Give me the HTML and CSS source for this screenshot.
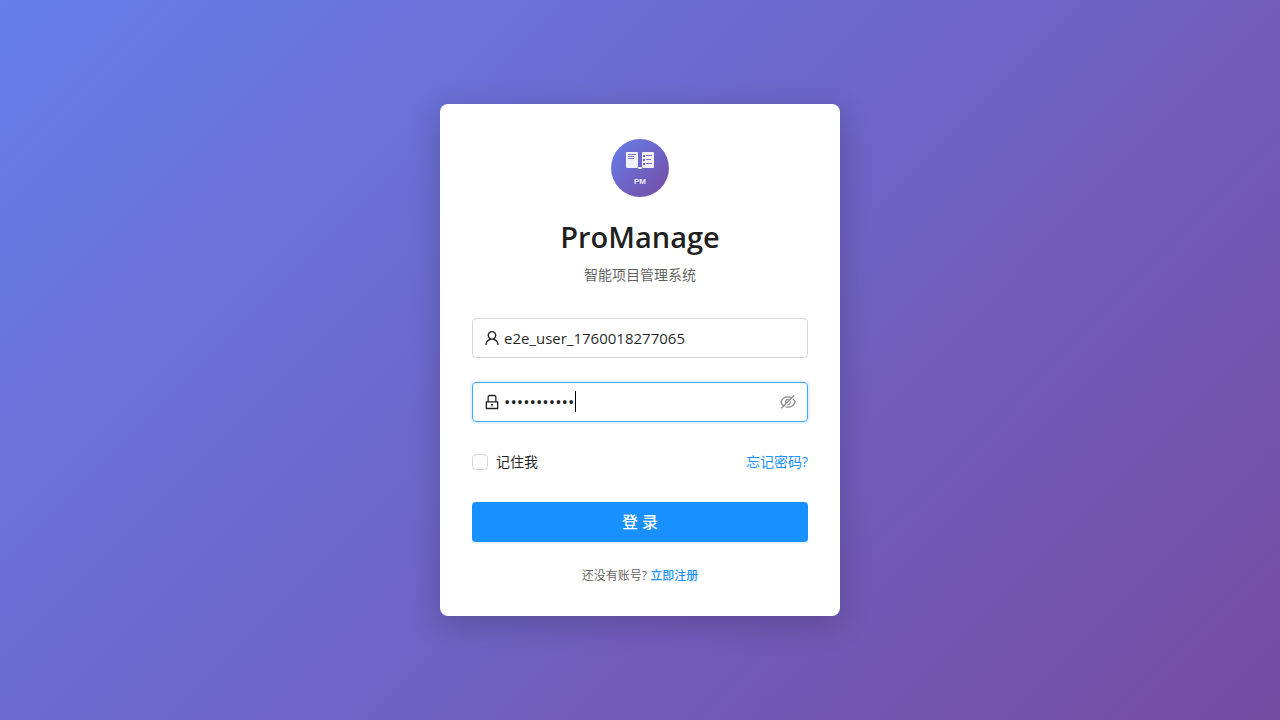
FILE: index.html
```html
<!DOCTYPE html>
<html lang="zh-CN">
<head>
<meta charset="utf-8">
<meta name="viewport" content="width=device-width, initial-scale=1">
<title>ProManage</title>
<link rel="stylesheet" href="styles.css">
</head>
<body>
<main class="login-page">
  <section class="login-card">
    <header class="login-header">
      <svg class="logo" viewBox="0 0 64 64" role="img" aria-label="ProManage">
        <defs>
          <linearGradient id="logo-fill" x1="0" y1="0" x2="1" y2="1">
            <stop offset="0" stop-color="#667eea"/>
            <stop offset="1" stop-color="#764ba2"/>
          </linearGradient>
        </defs>
        <circle cx="32" cy="32" r="29" fill="url(#logo-fill)"/>
        <g fill="#fff" fill-opacity=".9">
          <rect x="18" y="16" width="12" height="16" rx="1"/>
          <rect x="34" y="16" width="12" height="16" rx="1"/>
          <rect x="30" y="31" width="4" height="2" rx="1"/>
        </g>
        <g stroke="#6d67cb" stroke-width=".9">
          <path d="M20 18.5h8M20 20.5h6M20 22.5h6"/>
          <path d="M38 19.5h6M38 23.5h5M38 27.5h6"/>
        </g>
        <g fill="#6d67cb">
          <rect x="35" y="19" width="2" height="2"/>
          <rect x="35" y="23" width="2" height="2"/>
          <rect x="35" y="27" width="2" height="2"/>
        </g>
        <text class="logo-text" x="32" y="48" text-anchor="middle">PM</text>
      </svg>
      <h1 class="title">ProManage</h1>
      <p class="subtitle">智能项目管理系统</p>
    </header>
    <form class="login-form">
      <div class="field">
        <svg class="field-icon" viewBox="64 64 896 896" aria-hidden="true"><path d="M858.5 763.6a374 374 0 00-80.6-119.5 375.63 375.63 0 00-119.5-80.6c-.4-.2-.8-.3-1.2-.5C719.5 518 760 444.7 760 362c0-137-111-248-248-248S264 225 264 362c0 82.7 40.5 156 102.8 201.1-.4.2-.8.3-1.2.5-44.8 18.9-85 46-119.5 80.6a375.63 375.63 0 00-80.6 119.5A371.7 371.7 0 00136 901.8a8 8 0 008 8.2h60c4.4 0 7.9-3.5 8-7.8 2-77.2 33-149.5 87.8-204.3 56.7-56.7 132-87.9 212.2-87.9s155.5 31.2 212.2 87.9C779 752.7 810 825 812 902.2c.1 4.4 3.6 7.8 8 7.8h60a8 8 0 008-8.2c-1-47.8-10.9-94.3-29.5-138.2zM512 534c-45.9 0-89.1-17.9-121.6-50.4S340 407.9 340 362c0-45.9 17.9-89.1 50.4-121.6S466.1 190 512 190s89.1 17.9 121.6 50.4S684 316.1 684 362c0 45.9-17.9 89.1-50.4 121.6S557.9 534 512 534z"/></svg>
        <input class="field-input" type="text" aria-label="用户名" value="e2e_user_1760018277065">
      </div>
      <div class="field field-active">
        <svg class="field-icon" viewBox="64 64 896 896" aria-hidden="true"><path d="M832 464h-68V240c0-70.7-57.3-128-128-128H388c-70.7 0-128 57.3-128 128v224h-68c-17.7 0-32 14.3-32 32v384c0 17.7 14.3 32 32 32h640c17.7 0 32-14.3 32-32V496c0-17.7-14.3-32-32-32zM332 240c0-30.9 25.1-56 56-56h248c30.9 0 56 25.1 56 56v224H332V240zm460 600H232V536h560v304zM484 701v53c0 4.4 3.6 8 8 8h40c4.4 0 8-3.6 8-8v-53a48.01 48.01 0 10-56 0z"/></svg>
        <span class="password-box">
          <input class="field-input password-input" type="password" aria-label="密码" value="Test@123456">
          <span class="caret"></span>
        </span>
        <button class="eye-button" type="button" aria-label="显示密码">
          <svg class="eye-icon" viewBox="64 64 896 896" aria-hidden="true"><path d="M942.2 486.2Q889.47 375.11 816.7 305l-50.88 50.88C807.31 395.53 843.45 447.4 874.7 512 791.5 684.2 673.4 766 512 766q-72.67 0-133.87-22.38L323 798.75Q408 838 512 838q288.3 0 430.2-300.3a60.29 60.29 0 000-51.5zm-63.57-320.64L836 122.88a8 8 0 00-11.32 0L715.31 232.2Q624.86 186 512 186q-288.3 0-430.2 300.3a60.3 60.3 0 000 51.5q56.69 119.4 136.5 191.41L112.48 835a8 8 0 000 11.31L155.17 889a8 8 0 0011.31 0l712.15-712.12a8 8 0 000-11.32zM149.3 512C232.6 339.8 350.7 258 512 258c54.54 0 104.13 9.36 149.12 28.39l-70.3 70.3a176 176 0 00-238.13 238.13l-83.42 83.42C223.1 637.49 183.3 582.28 149.3 512zm246.7 0a112.11 112.11 0 01146.2-106.69L401.31 546.2A112 112 0 01396 512z"/><path d="M508 624c-3.46 0-6.87-.16-10.25-.47l-52.82 52.82a176.09 176.09 0 00227.42-227.42l-52.82 52.82c.31 3.38.47 6.79.47 10.25a111.94 111.94 0 01-112 112z"/></svg>
        </button>
      </div>
      <div class="options">
        <label class="remember"><input class="checkbox" type="checkbox">记住我</label>
        <a class="link" href="#">忘记密码?</a>
      </div>
      <button class="submit" type="submit">登 录</button>
    </form>
    <p class="signup">还没有账号? <a class="link link-strong" href="#">立即注册</a></p>
  </section>
</main>
</body>
</html>
```
FILE: styles.css
```css
* {
  box-sizing: border-box;
}

body {
  margin: 0;
  color: rgba(0, 0, 0, 0.88);
  font-family: "Open Sans", "Noto Sans CJK SC", sans-serif;
  font-size: 14px;
  line-height: 22px;
}

.login-page {
  display: flex;
  align-items: center;
  justify-content: center;
  min-height: 100vh;
  padding: 20px;
  background: linear-gradient(135deg, #667eea 0%, #764ba2 100%);
}

.login-card {
  width: 100%;
  max-width: 400px;
  padding: 32px 32px 30px;
  border-radius: 8px;
  background: #fff;
  box-shadow: 0 8px 32px rgba(0, 0, 0, 0.2);
}

.login-header {
  display: flex;
  flex-direction: column;
  align-items: center;
  margin-bottom: 32px;
}

.logo {
  width: 64px;
  height: 64px;
  margin-bottom: 18px;
}

.logo-text {
  fill: #fff;
  fill-opacity: 0.9;
  font-family: "Liberation Sans", sans-serif;
  font-size: 8px;
  font-weight: 700;
}

.title {
  margin: 0 0 8px;
  font-size: 29px;
  font-weight: 600;
  line-height: 38px;
}

.subtitle {
  margin: 0;
  color: rgba(0, 0, 0, 0.65);
}

.login-form {
  display: flex;
  flex-direction: column;
  gap: 24px;
}

.field {
  display: flex;
  align-items: center;
  gap: 4px;
  height: 40px;
  padding: 0 11px;
  border: 1px solid #d9d9d9;
  border-radius: 4px;
}

.field-active {
  border-color: #40a9ff;
  box-shadow: 0 0 0 2px rgba(24, 144, 255, 0.1);
}

.field-icon {
  flex: none;
  width: 16px;
  height: 16px;
  fill: rgba(0, 0, 0, 0.88);
}

.field-input {
  flex: 1;
  width: 100%;
  min-width: 0;
  padding: 0;
  border: 0;
  outline: 0;
  background: transparent;
  color: rgba(0, 0, 0, 0.88);
  font: inherit;
  font-size: 15px;
  line-height: 24px;
}

.password-input {
  font-size: 17px;
}

.password-box {
  position: relative;
  display: flex;
  flex: 1;
}

.caret {
  position: absolute;
  top: 1px;
  left: 71px;
  width: 1px;
  height: 21px;
  background: #000;
}

.eye-button {
  display: flex;
  padding: 0;
  border: 0;
  background: none;
}

.eye-icon {
  width: 16px;
  height: 16px;
  fill: rgba(0, 0, 0, 0.45);
}

.options {
  display: flex;
  align-items: center;
  justify-content: space-between;
  height: 32px;
}

.remember {
  display: flex;
  align-items: center;
  gap: 8px;
}

.checkbox {
  width: 16px;
  height: 16px;
  margin: 0;
  border: 1px solid #d9d9d9;
  border-radius: 4px;
  background: #fff;
  appearance: none;
}

.checkbox:checked {
  border-color: #1890ff;
  background: #1890ff;
}

.link {
  color: #1890ff;
  text-decoration: none;
}

.link-strong {
  font-weight: 500;
}

.submit {
  height: 40px;
  border: 0;
  border-radius: 4px;
  background: #1890ff;
  box-shadow: 0 2px 0 rgba(5, 145, 255, 0.1);
  color: #fff;
  font: inherit;
  font-size: 16px;
  font-weight: 500;
}

.signup {
  margin: 24px 0 0;
  color: rgba(0, 0, 0, 0.65);
  font-size: 12px;
  line-height: 20px;
  text-align: center;
}
```
